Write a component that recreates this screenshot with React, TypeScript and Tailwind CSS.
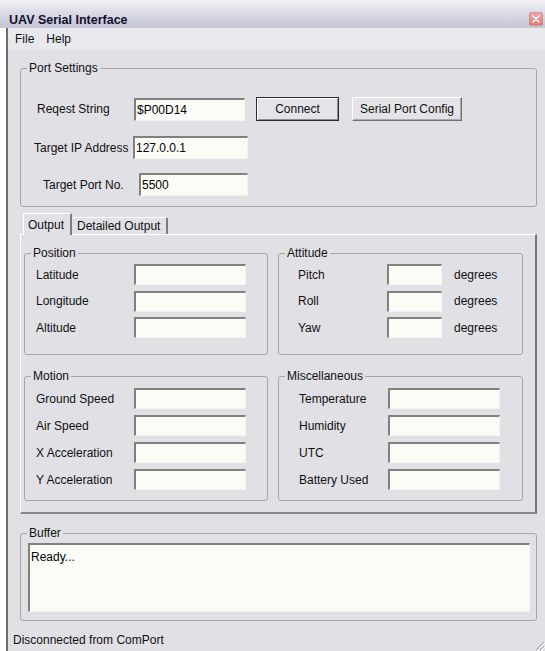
import React from "react";

type BoxProps = { w: string; h?: string; value?: string; className?: string };

// Classic sunken edit box
function TextBox({ w, h = "h-[21px]", value, className = "" }: BoxProps) {
  return (
    <div
      className={`${w} ${h} shrink-0 bg-[#fcfcf7] border-t-2 border-l-2 border-r border-b border-t-[#808080] border-l-[#808080] border-r-[#f3f3f3] border-b-[#f3f3f3] flex items-center pl-[1px] leading-none text-black ${className}`}
    >
      {value}
    </div>
  );
}

// Etched group box with caption
function Group({
  title,
  className = "",
  children,
}: {
  title: string;
  className?: string;
  children?: React.ReactNode;
}) {
  return (
    <fieldset className={`border border-[#a6a6aa] rounded-[3px] min-w-0 ${className}`}>
      <legend className="ml-[6px] px-[2px] leading-[14px] text-[#111]">{title}</legend>
      {children}
    </fieldset>
  );
}

function Field({
  label,
  labelW,
  boxW,
  unit,
}: {
  label: string;
  labelW: string;
  boxW: string;
  unit?: string;
}) {
  return (
    <div className="flex items-center h-[21px]">
      <span className={`${labelW} shrink-0 whitespace-nowrap`}>{label}</span>
      <TextBox w={boxW} />
      {unit && <span className="ml-[12px]">{unit}</span>}
    </div>
  );
}

function CloseButton() {
  return (
    <div className="w-[14px] h-[14px] rounded-[2px] bg-gradient-to-b from-[#f0a8a8] to-[#dc7c7c] border border-[#d88c8c] flex items-center justify-center">
      <svg width="8" height="8" viewBox="0 0 8 8">
        <path d="M1 1 L7 7 M7 1 L1 7" stroke="#ffffff" strokeWidth="1.6" strokeLinecap="round" />
      </svg>
    </div>
  );
}

function ResizeGrip() {
  return (
    <svg width="12" height="12" viewBox="0 0 12 12" className="self-end">
      <path d="M11 3 L3 11 M11 7 L7 11 M11 11 L11 11" stroke="#a0a0a6" strokeWidth="1" />
      <path d="M12 4 L4 12 M12 8 L8 12" stroke="#ffffff" strokeWidth="1" />
    </svg>
  );
}

export default function App() {
  return (
    <div className="w-[545px] h-[651px] bg-white flex flex-col overflow-hidden font-['Liberation_Sans',Arial,sans-serif] text-[12px] text-[#111]">
      {/* title bar */}
      <div className="h-[28px] shrink-0 bg-gradient-to-b from-[#f2f2f7] via-[#d9d9e6] to-[#c4c4d5] flex items-start justify-between pl-[9px] pr-[2px] pt-[12px]">
        <span className="font-bold text-[12.5px] leading-[16px] text-[#10102a]">UAV Serial Interface</span>
        <CloseButton />
      </div>

      {/* window body */}
      <div className="flex-1 flex flex-col ml-[6px] border-l-2 border-[#6c6c70] bg-[#e0e0e5]">
        {/* menu */}
        <div className="h-[22px] shrink-0 bg-[#e8e8ef] flex items-center gap-[12px] pl-[7px]">
          <span>File</span>
          <span>Help</span>
        </div>

        <div className="flex-1 flex flex-col pl-[12px] pr-[8px]">
          {/* port settings */}
          <Group title="Port Settings" className="mt-[11px] h-[146px] flex flex-col">
            <div className="flex items-center h-[24px] mt-[22px]">
              <span className="ml-[16px] w-[97px] shrink-0">Reqest String</span>
              <TextBox w="w-[111px]" h="h-[23px]" value="$P00D14" />
              <div className="ml-[11px] w-[83px] h-[24px] border border-[#2c2c2c] bg-[#e4e4e8] shadow-[inset_1px_1px_0_#ffffff,inset_-1px_-1px_0_#8c8c8c] flex items-center justify-center">
                Connect
              </div>
              <div className="ml-[13px] w-[110px] h-[24px] border-t border-l border-r border-b border-t-white border-l-white border-r-[#707070] border-b-[#707070] bg-[#e4e4e8] shadow-[inset_-1px_-1px_0_#ababab] flex items-center justify-center">
                Serial Port Config
              </div>
            </div>
            <div className="flex items-center h-[23px] mt-[15px]">
              <span className="ml-[13px] w-[99px] shrink-0">Target IP Address</span>
              <TextBox w="w-[115px]" h="h-[23px]" value="127.0.0.1" />
            </div>
            <div className="flex items-center h-[23px] mt-[14px]">
              <span className="ml-[22px] w-[96px] shrink-0">Target Port No.</span>
              <TextBox w="w-[109px]" h="h-[23px]" value="5500" />
            </div>
          </Group>

          {/* tabs */}
          <div className="mt-[6px] h-[21px] flex items-end pl-[3px] relative z-10">
            <div className="w-[49px] h-[22px] -mb-[1px] bg-[#e0e0e5] border-t border-l border-white border-r-2 border-r-[#7c7c80] rounded-t-[2px] flex items-center pl-[4px]">
              Output
            </div>
            <div className="w-[96px] h-[17px] bg-[#e0e0e5] border-t border-white border-r-2 border-r-[#7c7c80] rounded-t-[2px] flex items-center pl-[5px]">
              Detailed Output
            </div>
          </div>

          {/* tab page */}
          <div className="h-[280px] shrink-0 border-t border-l border-white border-r-2 border-b-2 border-r-[#77777b] border-b-[#8a8a8e] pl-[3px] pr-[12px] pt-[11px] grid grid-cols-[244px_245px] gap-x-[10px] gap-y-[14px] content-start">
            <Group title="Position" className="h-[109px] flex flex-col">
              <div className="flex flex-col gap-[5.5px] mt-[4px] pl-[11px]">
                <Field label="Latitude" labelW="w-[98px]" boxW="w-[112px]" />
                <Field label="Longitude" labelW="w-[98px]" boxW="w-[112px]" />
                <Field label="Altitude" labelW="w-[98px]" boxW="w-[112px]" />
              </div>
            </Group>
            <Group title="Attitude" className="h-[109px] flex flex-col">
              <div className="flex flex-col gap-[5.5px] mt-[4px] pl-[19px]">
                <Field label="Pitch" labelW="w-[89px]" boxW="w-[55px]" unit="degrees" />
                <Field label="Roll" labelW="w-[89px]" boxW="w-[55px]" unit="degrees" />
                <Field label="Yaw" labelW="w-[89px]" boxW="w-[55px]" unit="degrees" />
              </div>
            </Group>
            <Group title="Motion" className="h-[132px] flex flex-col">
              <div className="flex flex-col gap-[6px] mt-[5px] pl-[11px]">
                <Field label="Ground Speed" labelW="w-[98px]" boxW="w-[112px]" />
                <Field label="Air Speed" labelW="w-[98px]" boxW="w-[112px]" />
                <Field label="X Acceleration" labelW="w-[98px]" boxW="w-[112px]" />
                <Field label="Y Acceleration" labelW="w-[98px]" boxW="w-[112px]" />
              </div>
            </Group>
            <Group title="Miscellaneous" className="h-[132px] flex flex-col">
              <div className="flex flex-col gap-[6px] mt-[5px] pl-[20px]">
                <Field label="Temperature" labelW="w-[89px]" boxW="w-[112px]" />
                <Field label="Humidity" labelW="w-[89px]" boxW="w-[112px]" />
                <Field label="UTC" labelW="w-[89px]" boxW="w-[112px]" />
                <Field label="Battery Used" labelW="w-[89px]" boxW="w-[112px]" />
              </div>
            </Group>
          </div>

          {/* buffer */}
          <Group title="Buffer" className="mt-[12px] h-[95px] flex flex-col">
            <div className="ml-[7px] mt-[3px] w-[502px] h-[69px] bg-[#fcfcf7] border-t-2 border-l-2 border-r border-b border-t-[#808080] border-l-[#808080] border-r-[#f3f3f3] border-b-[#f3f3f3] pl-[1px] pt-[5px] leading-[14px] text-black">
              Ready...
            </div>
          </Group>

          {/* status bar */}
          <div className="flex-1 flex justify-between -ml-[12px] -mr-[8px] pl-[5px] pt-[12px]">
            <span className="leading-[14px]">Disconnected from ComPort</span>
            <ResizeGrip />
          </div>
        </div>
      </div>
    </div>
  );
}
